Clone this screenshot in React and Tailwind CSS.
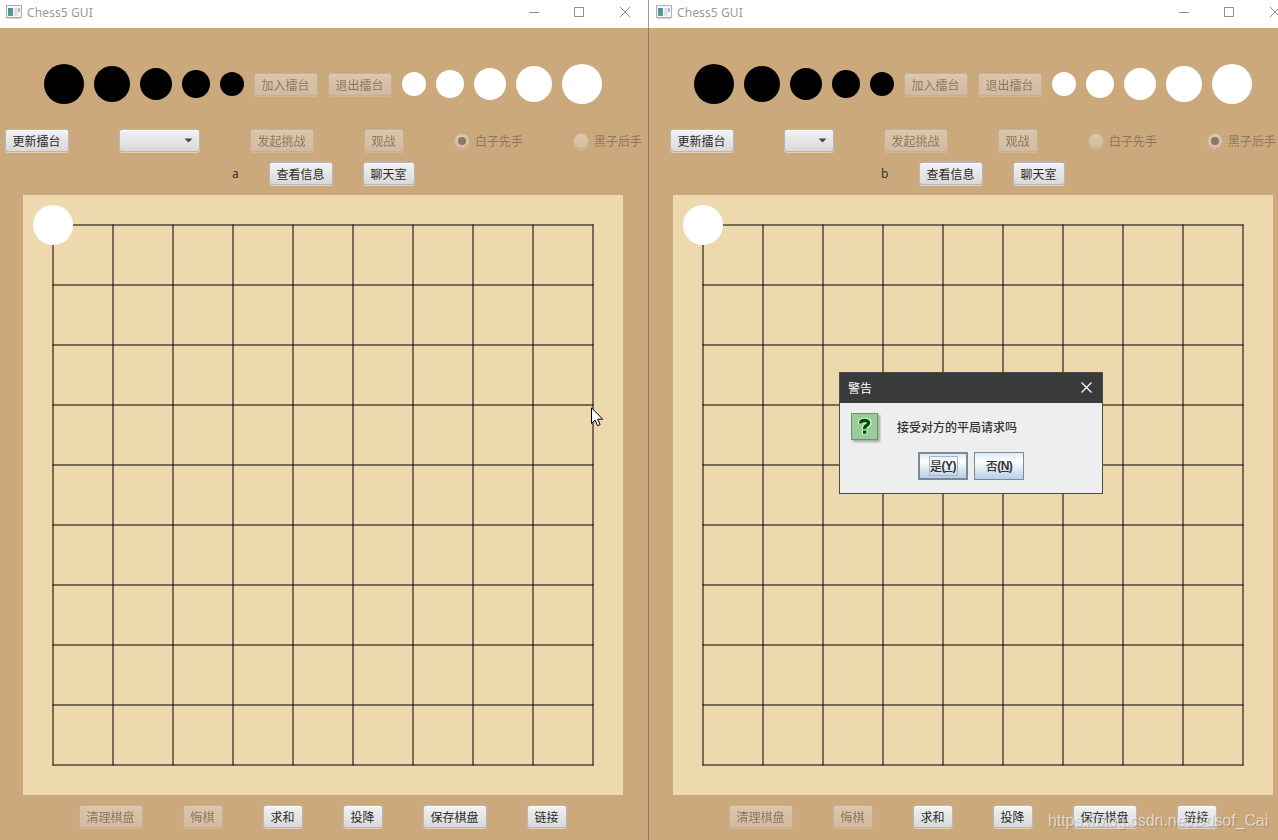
const lines = [0, 1, 2, 3, 4, 5, 6, 7, 8, 9];

function Button({ children, disabled, className = "" }) {
    return (
        <div
            className={
                "mb-px h-[23px] shrink-0 rounded-[3px] border border-[#b4b8be] bg-linear-to-b from-[#f2f2f2] to-[#d9d9d9] px-[6.5px] text-[12px] leading-[21px] whitespace-nowrap text-[#2b2b2b] shadow-[inset_0_1px_0_#fff,0_1px_0_rgba(255,255,255,0.45)] " +
                (disabled ? "opacity-40 " : "") +
                className
            }
        >
            {children}
        </div>
    );
}

function Radio({ label, checked }) {
    return (
        <div className="flex h-6 shrink-0 items-center gap-[5px] opacity-40">
            <span className="flex size-4 items-center justify-center rounded-full border border-[#b6b6b6] bg-linear-to-b from-[#f4f4f4] to-[#dedede] shadow-[inset_0_1px_0_#fff,0_1px_0_rgba(255,255,255,0.45)]">
                {checked && <span className="size-2 rounded-full bg-[#333]" />}
            </span>
            <span className="text-[12px] leading-6 whitespace-nowrap text-[#2b2b2b]">{label}</span>
        </div>
    );
}

function TitleBar() {
    return (
        <div className="flex h-7 shrink-0 items-start bg-white">
            <svg className="mt-[5px] ml-[6px] shrink-0" width="16" height="14" viewBox="0 0 16 14">
                <defs>
                    <linearGradient id="pane" x1="0" y1="0" x2="0.4" y2="1">
                        <stop offset="0" stopColor="#5a80b4" />
                        <stop offset="1" stopColor="#4fa584" />
                    </linearGradient>
                </defs>
                <rect x="0.5" y="0.5" width="15" height="12" fill="#f6f6f6" stroke="#a9afb5" />
                <rect x="2" y="3" width="5" height="8" fill="url(#pane)" />
                <rect x="8" y="3" width="4" height="8" fill="#e2e2e2" />
                <rect x="12" y="3" width="2" height="4" fill="#9cc3d6" />
                <path d="M1 13.5h14" stroke="#d4d4d4" />
            </svg>
            <span className="ml-[5px] grow font-['Noto_Sans'] text-[12px] leading-[26px] tracking-[0.1px] text-[#999]">Chess5 GUI</span>
            <svg className="mt-[6px] mr-[17px] shrink-0" width="103" height="13" fill="none" stroke="#8f8f8f">
                <path d="M1 6.5h10M46.5 1.5h9v9h-9z" />
                <path d="M92 1l10 10M102 1l-10 10" />
            </svg>
        </div>
    );
}

function Board() {
    return (
        <svg className="mt-[9px] ml-[23px] shrink-0 bg-[#eed9ae]" width="600" height="600">
            {lines.map((i) => (
                <g key={i} stroke="#000" strokeLinecap="square">
                    <line x1={30 + i * 60} y1="30" x2={30 + i * 60} y2="570" />
                    <line x1="30" y1={30 + i * 60} x2="570" y2={30 + i * 60} />
                </g>
            ))}
            <circle cx="30" cy="30" r="20" fill="#fff" />
        </svg>
    );
}

function GameWindow({ name, first, indent, nameClass, comboWidth }) {
    return (
        <div className="flex h-[840px] w-[648px] shrink-0 flex-col bg-[#cca97c]">
            <TitleBar />
            <div className="mt-9 flex h-10 shrink-0 items-center gap-2.5 pl-11">
                <span className="size-10 rounded-full bg-black" />
                <span className="size-9 rounded-full bg-black" />
                <span className="size-8 rounded-full bg-black" />
                <span className="size-7 rounded-full bg-black" />
                <span className="size-6 rounded-full bg-black" />
                <Button disabled className="mt-0.5 w-16">加入擂台</Button>
                <Button disabled className="mt-0.5 w-16">退出擂台</Button>
                <span className="size-6 rounded-full bg-white" />
                <span className="size-7 rounded-full bg-white" />
                <span className="size-8 rounded-full bg-white" />
                <span className="size-9 rounded-full bg-white" />
                <span className="size-10 rounded-full bg-white" />
            </div>
            <div className={"mt-[25px] flex h-6 shrink-0 gap-[50px] " + indent}>
                <Button className="w-16">更新擂台</Button>
                <Button className={"flex items-center justify-end " + comboWidth}>
                    <svg width="9" height="5">
                        <path d="M0.5 0.5h8l-4 4z" fill="#444" />
                    </svg>
                </Button>
                <Button disabled className="w-16">发起挑战</Button>
                <Button disabled className="w-10">观战</Button>
                <Radio label="白子先手" checked={first} />
                <Radio label="黑子后手" checked={!first} />
            </div>
            <div className="mt-[9px] flex h-6 shrink-0">
                <span className={"mr-[30px] font-['Noto_Sans'] text-[12px] leading-6 text-[#333] " + nameClass}>{name}</span>
                <Button className="mr-[30px] w-16">查看信息</Button>
                <Button className="w-[52px]">聊天室</Button>
            </div>
            <Board />
            <div className="mt-2.5 flex shrink-0 gap-10 pl-[79px]">
                <Button disabled className="w-16">清理棋盘</Button>
                <Button disabled className="w-10">悔棋</Button>
                <Button className="w-10">求和</Button>
                <Button className="w-10">投降</Button>
                <Button className="w-16">保存棋盘</Button>
                <Button className="w-10">链接</Button>
            </div>
        </div>
    );
}

function Dialog() {
    const button =
        "flex h-7 w-[50px] items-center justify-center border-[#7a8a99] bg-linear-to-b from-[#dde8f3] via-white via-30% to-[#b8cfe5] text-[12px] font-medium text-[#333]";

    return (
        <div className="absolute top-[372px] left-[839px] h-[122px] w-[264px] border border-[#4b4b4b] bg-[#eee]">
            <div className="flex h-[30px] items-center justify-between bg-[#3a3a3a] pr-[10px] pb-px pl-2 text-[12px] text-white">
                <span>警告</span>
                <svg className="mb-px" width="11" height="11" stroke="#fff" strokeWidth="1.2">
                    <path d="M0.5 0.5l10 10M10.5 0.5l-10 10" />
                </svg>
            </div>
            <div className="flex pt-[10px] pl-[11px]">
                <svg className="shrink-0 drop-shadow-[2px_2px_1px_rgba(0,0,0,0.3)]" width="27" height="27">
                    <rect x="0.5" y="0.5" width="26" height="26" fill="#99cc99" stroke="#669966" />
                    <g fill="none">
                        <path d="M9.5 11V9.5q0-2 4.200-2t4.200 2.500q0 1.500-2.100 2.500t-2.100 3.200M13.700 17v4.500" stroke="#ccffcc" strokeWidth="5.500" />
                        <path d="M9.800 10.500V9.700q0-2.200 3.900-2.200t3.900 2.500q0 1.500-2 2.500t-1.900 3.400M13.700 17.500v3.200" stroke="#004b00" strokeWidth="3.400" />
                    </g>
                </svg>
                <span className="ml-[19px] text-[12px] leading-[27px] font-medium text-[#333]">接受对方的平局请求吗</span>
            </div>
            <div className="mt-3 flex gap-1.5 pl-[78px]">
                <div className={button + " border-2"}>
                    <span className="flex h-5 w-[29px] items-center justify-center border border-[#a3b8cc] whitespace-nowrap tracking-[-0.5px]">
                        是<b className="font-['Liberation_Sans']">(<u>Y</u>)</b>
                    </span>
                </div>
                <div className={button + " border whitespace-nowrap tracking-[-0.5px]"}>
                    否<b className="font-['Liberation_Sans']">(<u>N</u>)</b>
                </div>
            </div>
        </div>
    );
}

export default function App() {
    return (
        <div className="relative flex h-[840px] w-[1278px] overflow-hidden bg-[#cca97c] font-['Noto_Sans_CJK_SC',sans-serif]">
            <GameWindow name="a" first indent="pl-[5px]" nameClass="ml-[232px] w-[7px]" comboWidth="w-[81px]" />
            <div className="flex w-[2px] shrink-0 flex-col bg-[#cca97c]">
                <div className="h-7 border-l border-[#999] bg-white" />
                <div className="grow border-l border-[#8d7b64]" />
            </div>
            <GameWindow name="b" indent="pl-5" nameClass="ml-[231px] w-2" comboWidth="w-[50px]" />
            <Dialog />
            <svg className="absolute top-[407px] left-[591px]" width="13" height="20">
                <path d="M0.500 0.800v15.700l3.600-3.400 2.400 5.600 2.600-1.100-2.400-5.400h5z" fill="#fff" stroke="#000" />
            </svg>
            <span className="absolute top-[809px] left-[1048px] font-['Liberation_Sans'] text-[16px] leading-6 tracking-[-0.07px] whitespace-nowrap text-white/60 [text-shadow:1px_1px_1px_rgba(0,0,0,0.2)]">
                https://blog.csdn.net/Ddsof_Cai
            </span>
        </div>
    );
}
